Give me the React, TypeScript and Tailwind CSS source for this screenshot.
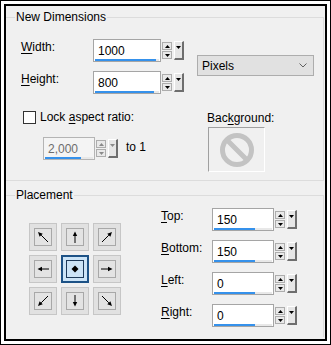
import type { ReactNode } from "react";

/* ─── small glyphs ─── */

function Tri({ down = false, color = "#000" }: { down?: boolean; color?: string }) {
  return (
    <svg width="5" height="3" viewBox="0 0 5 3">
      <polygon points={down ? "0,0 5,0 2.5,3" : "0,3 5,3 2.5,0"} fill={color} />
    </svg>
  );
}

/* ─── spin box with slider bar and drop button ─── */

function SpinBox({
  value,
  boxW,
  barW,
  disabled = false,
}: {
  value: string;
  boxW: string;
  barW: string;
  disabled?: boolean;
}) {
  const tri = disabled ? "#8a8a8a" : "#000";
  return (
    <div className="flex items-start">
      <div
        className={`flex h-[23px] flex-col border ${boxW} ${
          disabled ? "border-[#b4b4b4] bg-[#f4f4f4] text-[#6d6d6d]" : "border-[#a5a5a5] bg-white text-black"
        }`}
      >
        <div className="pl-[4px] pt-[3px] leading-4">{value}</div>
        <div className="mb-[1px] ml-px mr-px mt-auto h-[2px] bg-[#e8e8e8]">
          <div className={`h-[2px] bg-[#3591eb] ${barW}`} />
        </div>
      </div>
      <div className="ml-px mt-[3px] flex flex-col gap-px">
        <div className="flex h-[8px] w-[10px] items-center justify-center border border-[#adadad] bg-[#e9e9e9]">
          <Tri color={tri} />
        </div>
        <div className="flex h-[8px] w-[10px] items-center justify-center border border-[#adadad] bg-[#e9e9e9]">
          <Tri down color={tri} />
        </div>
      </div>
      <div className="ml-[2px] mt-[2px] flex h-[19px] w-[10px] items-start justify-center border-b-2 border-l border-r-2 border-t border-b-[#6e6e6e] border-l-white border-r-[#6e6e6e] border-t-white bg-[#e6e6e6] pt-[4px]">
        <Tri down color={tri} />
      </div>
    </div>
  );
}

/* ─── label with access key underline ─── */

function Key({ pre = "", k, post }: { pre?: string; k: string; post: string }) {
  return (
    <span>
      {pre}
      <span className="underline underline-offset-2">{k}</span>
      {post}
    </span>
  );
}

/* ─── placement grid ─── */

function Arrow({ dir }: { dir: string }) {
  // arrow geometry inside a 14x14 box
  const lines: Record<string, [number, number, number, number]> = {
    nw: [12, 12, 2, 2],
    n: [7, 13, 7, 1.5],
    ne: [2, 12, 12, 2],
    w: [13, 7, 1.5, 7],
    e: [1, 7, 12.5, 7],
    sw: [12, 2, 2, 12],
    s: [7, 1, 7, 12.5],
    se: [2, 2, 12, 12],
  };
  if (dir === "c") {
    return (
      <svg width="14" height="14" viewBox="0 0 14 14">
        <polygon points="7,3.5 10.5,7 7,10.5 3.5,7" fill="#000" />
      </svg>
    );
  }
  const [x1, y1, x2, y2] = lines[dir];
  const a = Math.atan2(y2 - y1, x2 - x1);
  const len = 4.5;
  const wid = 2.2;
  const bx = x2 - len * Math.cos(a);
  const by = y2 - len * Math.sin(a);
  const px = -Math.sin(a) * wid;
  const py = Math.cos(a) * wid;
  return (
    <svg width="14" height="14" viewBox="0 0 14 14">
      <line x1={x1} y1={y1} x2={bx} y2={by} stroke="#000" strokeWidth={1} />
      <polygon points={`${x2},${y2} ${bx + px},${by + py} ${bx - px},${by - py}`} fill="#000" />
    </svg>
  );
}

function Cell({ dir }: { dir: string }) {
  const sel = dir === "c";
  return (
    <div
      className={`flex h-[28px] w-[28px] items-center justify-center ${
        sel ? "border-2 border-[#1d5286] bg-[#cce4f7]" : "border border-[#c6c6c6] bg-[#e1e1e1]"
      }`}
    >
      <div
        className={`flex h-[18px] w-[18px] items-center justify-center border ${
          sel ? "border-[#1d3a5a] bg-[#cce4f7]" : "border-[#a8a8a8] bg-[#e3e3e3]"
        }`}
      >
        <Arrow dir={dir} />
      </div>
    </div>
  );
}

// group box; its left edge sits under the dialog frame, so no left border
function Group({ title, className, children }: { title: string; className: string; children: ReactNode }) {
  return (
    <fieldset className={`w-[318px] border border-l-0 border-[#dcdcdc] ${className}`}>
      <legend className="ml-[9px] px-[1px] leading-4">{title}</legend>
      {children}
    </fieldset>
  );
}

export default function App() {
  return (
    <div
      className="h-[345px] w-[331px] border border-black bg-white p-[3px] text-[12px] text-black"
      style={{ fontFamily: '"Liberation Sans", Arial, sans-serif' }}
    >
      <div className="h-full overflow-hidden border-2 border-black bg-[#f0f0f0] pt-[3px]">
        {/* New Dimensions */}
        <Group title="New Dimensions" className="h-[172px]">
          <div className="flex">
            <div className="ml-[15px] w-[176px]">
              <div className="mt-[14px] flex items-start">
                <div className="w-[72px] leading-4">
                  <Key k="W" post="idth:" />
                </div>
                <SpinBox value="1000" boxW="w-[68px]" barW="w-[61px]" />
              </div>
              <div className="mt-[9px] flex items-start">
                <div className="w-[72px] leading-4">
                  <Key k="H" post="eight:" />
                </div>
                <SpinBox value="800" boxW="w-[68px]" barW="w-[59px]" />
              </div>
              <div className="ml-[2px] mt-[15px] flex h-4 items-center">
                <div className="h-[13px] w-[13px] border border-[#333] bg-white" />
                <div className="ml-[4px] leading-4">
                  <Key pre="Lock " k="a" post="spect ratio:" />
                </div>
              </div>
              <div className="ml-[22px] mt-[12px] flex items-start">
                <SpinBox value="2,000" boxW="w-[52px]" barW="w-[36px]" disabled />
                <div className="ml-[8px] pt-[2px] leading-4">to 1</div>
              </div>
            </div>
            <div>
              <div className="mt-[30px] flex h-[21px] w-[117px] items-center justify-between border border-[#adadad] bg-[#e1e1e1] pl-[4px] pr-[6px]">
                <span className="leading-4">Pixels</span>
                <svg width="8" height="5" viewBox="0 0 8 5">
                  <polyline points="0.5,0.5 4,4 7.5,0.5" fill="none" stroke="#606060" strokeWidth={1} />
                </svg>
              </div>
              <div className="ml-[10px] mt-[34px] leading-4">
                <Key pre="Bac" k="k" post="ground:" />
              </div>
              <div className="ml-[11px] mt-px flex h-[45px] w-[57px] items-center justify-center border-b border-l border-r border-t border-b-white border-l-[#a0a0a0] border-r-white border-t-[#a0a0a0]">
                <svg width="36" height="36" viewBox="0 0 36 36">
                  <circle cx="18" cy="18" r="14.5" fill="none" stroke="#c3c3c3" strokeWidth={5} />
                  <line x1="8" y1="8" x2="28" y2="28" stroke="#c3c3c3" strokeWidth={5} />
                </svg>
              </div>
            </div>
          </div>
        </Group>

        {/* Placement */}
        <Group title="Placement" className="mt-[6px] h-[150px] border-b-0">
          <div className="flex">
            <div className="ml-[23px] mt-[20px] grid grid-cols-3 gap-[4px] self-start">
              {["nw", "n", "ne", "w", "c", "e", "sw", "s", "se"].map((d) => (
                <Cell key={d} dir={d} />
              ))}
            </div>
            <div className="ml-[40px] mt-[5px] flex flex-col gap-[9px]">
              {[
                { k: "T", post: "op:", v: "150" },
                { k: "B", post: "ottom:", v: "150" },
                { k: "L", post: "eft:", v: "0" },
                { k: "R", post: "ight:", v: "0" },
              ].map((r) => (
                <div key={r.k} className="flex items-start">
                  <div className="w-[51px] leading-4">
                    <Key k={r.k} post={r.post} />
                  </div>
                  <SpinBox value={r.v} boxW="w-[62px]" barW="w-[41px]" />
                </div>
              ))}
            </div>
          </div>
        </Group>
      </div>
    </div>
  );
}
